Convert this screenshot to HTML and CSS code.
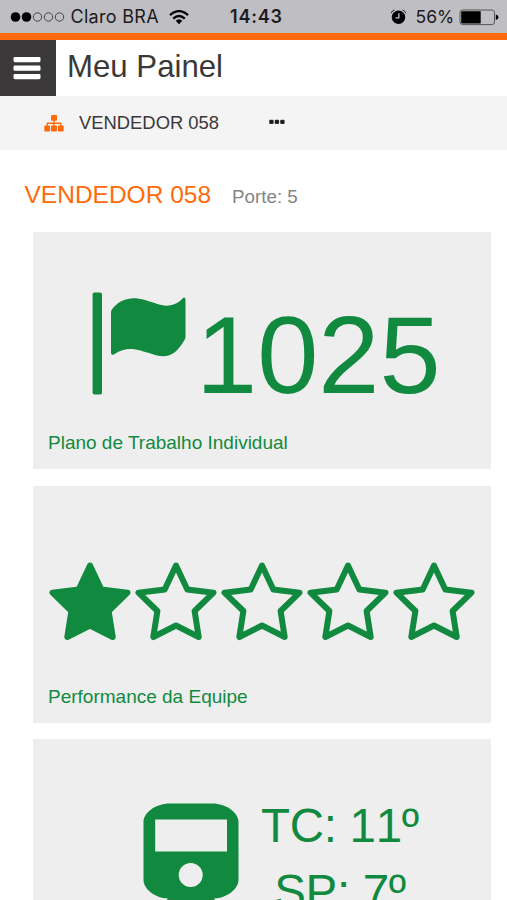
FILE: index.html
```html
<!DOCTYPE html>
<html lang="pt-BR">
<head>
<meta charset="utf-8">
<meta name="viewport" content="width=device-width, initial-scale=1">
<title>Meu Painel</title>
<link rel="stylesheet" href="styles.css">
</head>
<body>
<div class="status">
  <svg class="signal" width="56" height="12" viewBox="0 0 56 12"><circle cx="5.5" cy="6" r="4.8"/><circle cx="16.5" cy="6" r="4.8"/><g fill="none" stroke="#444446" stroke-width="1"><circle cx="27.5" cy="6" r="4.2"/><circle cx="38.5" cy="6" r="4.2"/><circle cx="49.5" cy="6" r="4.2"/></g></svg>
  <span class="carrier">Claro BRA</span>
  <svg class="wifi" width="20" height="15" viewBox="0 0 20 15"><g fill="none" stroke="#000" stroke-width="2.3"><path d="M1 5.2Q10-3 19 5.2"/><path d="M4.2 8.7Q10 3.2 15.8 8.7"/></g><path d="M6.7 10.8Q10 7.8 13.3 10.8L10 14.2Z"/></svg>
  <span class="time">14:43</span>
  <svg class="alarm" width="17" height="16" viewBox="0 0 17 16"><circle cx="8.5" cy="8.3" r="6.7"/><path d="M1.200 4.200Q2 1.600 4.500 .9M12.500 .9Q15 1.600 15.800 4.200" fill="none" stroke="#222" stroke-width="1"/><path d="M8.900 4.300v4.500H5.500" fill="none" stroke="#bfbec3" stroke-width="1.300"/></svg>
  <span class="percent">56%</span>
  <svg class="battery" width="40" height="17" viewBox="0 0 40 17"><rect x="1" y="1" width="34.5" height="14.6" rx="2.6" fill="none" stroke="#555558"/><path d="M3.2 2.2H21.7V14.4H3.2Q2.2 14.4 2.2 13.4V3.2Q2.2 2.2 3.2 2.2Z"/><path d="M36.8 5.6Q39.5 6 39.5 8.3T36.8 11Z"/></svg>
</div>
<header class="header">
  <button class="menu" aria-label="Menu"><svg width="28" height="24" viewBox="0 0 28 24" fill="#fff"><rect x=".5" y="1" width="27" height="5.2" rx="1.4"/><rect x=".5" y="9.600" width="27" height="5.2" rx="1.4"/><rect x=".5" y="18" width="27" height="5.2" rx="1.4"/></svg></button>
  <h1 class="title">Meu Painel</h1>
</header>
<nav class="crumbs">
  <svg width="20" height="17" viewBox="0 0 20 17" fill="#ff6a0a"><rect x="7" y="0" width="6" height="5.8" rx="1"/><rect x=".3" y="10.6" width="5.8" height="5.8" rx="1"/><rect x="7" y="10.6" width="6" height="5.8" rx="1"/><rect x="13.9" y="10.6" width="5.8" height="5.8" rx="1"/><path d="M10 5v6M3.2 11V8.8Q3.2 8.3 3.7 8.3H16.3Q16.8 8.3 16.8 8.8V11" fill="none" stroke="#ff6a0a" stroke-width="1.4"/></svg>
  <span class="crumb">VENDEDOR 058</span>
  <svg class="dots" width="16" height="6" viewBox="0 0 16 6" fill="#222"><rect x=".2" y=".8" width="4.4" height="4.2" rx="1.2"/><rect x="5.7" y=".8" width="4.4" height="4.2" rx="1.2"/><rect x="11.2" y=".8" width="4.4" height="4.2" rx="1.2"/></svg>
</nav>
<main>
  <div class="owner"><h2 class="name">VENDEDOR 058</h2><span class="size">Porte: 5</span></div>
  <section class="card">
    <div class="figure plan">
      <svg width="94" height="104" viewBox="0 0 94 104"><rect x=".6" y=".5" width="9.4" height="102" rx="1.8"/><path d="M19 20Q19 18 21 16C29 7 39 4 53 8C66 11.500 73 17 85 11Q88 9.500 91 6Q93.500 4.500 93.500 8V44.500Q93.500 46 92.500 48C83 64 75 67 60 62C46 58 36 53 22 62.400Q19 63.500 19 61Z"/></svg>
      <span class="number">1025</span>
    </div>
    <p class="caption">Plano de Trabalho Individual</p>
  </section>
  <section class="card">
    <div class="figure stars">
      <svg class="full" viewBox="0 0 86 82"><path d="M43 5.500L54.300 29.500L80.500 32.700L61.600 51L65.700 77L43 65.500L20.300 77L24.400 51L5.500 32.700L31.700 29.500Z"/></svg>
      <svg viewBox="0 0 86 82"><path d="M43 5.500L54.300 29.500L80.500 32.700L61.600 51L65.700 77L43 65.500L20.300 77L24.400 51L5.500 32.700L31.700 29.500Z"/></svg>
      <svg viewBox="0 0 86 82"><path d="M43 5.500L54.300 29.500L80.500 32.700L61.600 51L65.700 77L43 65.500L20.300 77L24.400 51L5.500 32.700L31.700 29.500Z"/></svg>
      <svg viewBox="0 0 86 82"><path d="M43 5.500L54.300 29.500L80.500 32.700L61.600 51L65.700 77L43 65.500L20.300 77L24.400 51L5.500 32.700L31.700 29.500Z"/></svg>
      <svg viewBox="0 0 86 82"><path d="M43 5.500L54.300 29.500L80.500 32.700L61.600 51L65.700 77L43 65.500L20.300 77L24.400 51L5.500 32.700L31.700 29.500Z"/></svg>
    </div>
    <p class="caption">Performance da Equipe</p>
  </section>
  <section class="card">
    <div class="figure ranks">
      <svg width="96" height="116" viewBox="0 0 96 116"><path fill-rule="evenodd" d="M27 .5H69C84 .5 95.500 10 95.500 19V77C95.500 86 84 95 71 95.500L84 112H12L25 95.500C12 95 .5 86 .5 77V19C.5 10 12 .5 27 .5ZM12.200 16.500V48.500H84V16.500ZM47.700 60A12 12 0 1 0 47.700 84A12 12 0 1 0 47.700 60Z"/></svg>
      <div class="places"><div>TC: 11º</div><div>SP: 7º</div></div>
    </div>
  </section>
</main>
</body>
</html>
```
FILE: styles.css
```css
* { box-sizing: border-box; }
html { height: 100%; overflow: hidden; }
body {
  margin: 0;
  height: 900px;
  overflow: hidden;
  background: #fff;
  color: #3b3839;
  font-family: "Liberation Sans", Arial, sans-serif;
}
svg { display: block; flex: none; }
h1, h2, p { margin: 0; font-weight: 400; }

.status {
  display: flex;
  align-items: center;
  height: 33px;
  padding: 1px 0 0 10px;
  background: #bfbec3;
  color: #1b1b1d;
  font: 17.5px/32px Inter, sans-serif;
  white-space: nowrap;
}
.carrier { width: 92px; margin-left: 4.5px; font-size: 18px; letter-spacing: .3px; }
.wifi { margin-left: 6px; }
.time { width: 54px; margin-left: 41.5px; font-weight: 600; font-size: 18px; letter-spacing: .8px; }
.alarm { margin-left: 106px; }
.percent { width: 40px; margin-left: 8.5px; }
.battery { margin-left: 3px; }

.header {
  display: flex;
  height: 63px;
  border-top: 7px solid #ff6a0a;
}
.menu {
  display: grid;
  place-items: center;
  width: 56px;
  height: 56px;
  padding: 0 2px 1px 0;
  border: 0;
  background: #3b3839;
}
.title { margin-left: 11px; font-size: 31.2px; line-height: 53px; white-space: nowrap; }

.crumbs {
  display: flex;
  align-items: center;
  height: 54px;
  padding-left: 44px;
  background: #f4f4f4;
  font-size: 18.4px;
}
.crumb { width: 142px; margin-left: 15px; white-space: nowrap; }
.dots { margin-left: 48px; margin-bottom: 3px; }

main { padding: 0 16px 0 24.5px; }
.owner {
  display: flex;
  align-items: baseline;
  height: 82px;
  padding-top: 26px;
  line-height: 38px;
}
.name { width: 187px; color: #ff6a0a; font-size: 24.5px; white-space: nowrap; }
.size { margin-left: 20.5px; color: #858585; font-size: 18.8px; }

.card {
  height: 237px;
  margin: 0 0 16.5px 8px;
  background: #eee;
  color: #118a40;
  fill: #118a40;
}
.figure { display: flex; height: 199px; }
.caption { padding-left: 15.5px; font-size: 19px; line-height: 24px; white-space: nowrap; }
.plan { padding: 60px 0 0 59.5px; }
.number { margin-left: 10px; font-size: 110px; line-height: 126px; }
.stars { padding: 74.5px 0 0 14.5px; }
.stars svg { width: 86px; height: 82px; }
.stars path { fill: none; stroke: #118a40; stroke-width: 6; stroke-linejoin: round; }
.stars .full path { fill: #118a40; }
.ranks { height: 161px; padding: 64px 0 0 110px; overflow: hidden; }
.places { width: 172px; margin-left: 15.5px; margin-top: -10px; font-size: 47.5px; line-height: 66px; letter-spacing: -.3px; font-kerning: none; text-align: center; white-space: nowrap; }
```
